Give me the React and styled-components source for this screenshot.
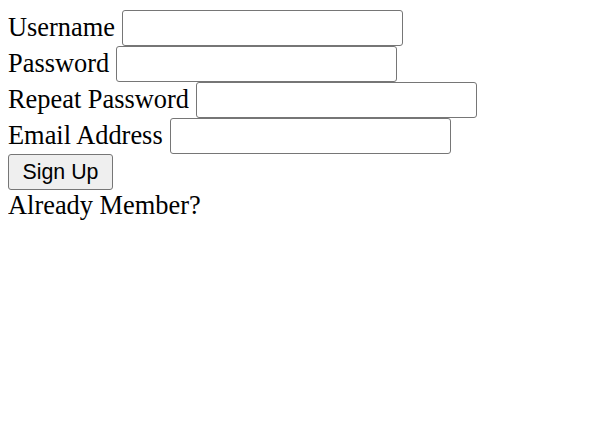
import React from "react";
import styled, { createGlobalStyle } from "styled-components";

const Global = createGlobalStyle`
  html, body { margin: 0; padding: 0; background: #fff; }
  body {
    margin: 8px;
    font-family: "Liberation Serif", "Times New Roman", serif;
    font-size: 26.67px;
    color: #000;
  }
`;

const Form = styled.form`
  display: flex;
  flex-direction: column;
  padding-top: 2px;
`;

const Row = styled.div`
  display: flex;
  align-items: center;
  height: 36px;
  gap: 7px;
  white-space: nowrap;
`;

const Label = styled.label`
  font-size: 26.4px;
  line-height: 30px;
  margin-top: -2px;
`;

const Input = styled.input`
  box-sizing: border-box;
  width: 281px;
  height: 36px;
  border: 1px solid #767676;
  border-radius: 3px;
  background: #fff;
  padding: 2px 3px;
  font-size: 20px;
  outline: none;
`;

const Button = styled.button`
  box-sizing: border-box;
  width: 105px;
  height: 36px;
  padding: 0;
  border: 1px solid #767676;
  border-radius: 3px;
  background: #efefef;
  font-family: "Liberation Sans", Arial, sans-serif;
  font-size: 21.33px;
  color: #000;
  align-self: flex-start;
`;

const Note = styled.div`
  font-size: 26.4px;
  line-height: 30.6px;
`;

const fields = [
  { id: "username", label: "Username", type: "text" },
  { id: "password", label: "Password", type: "password" },
  { id: "repeat", label: "Repeat Password", type: "password" },
  { id: "email", label: "Email Address", type: "email" },
];

export default function App() {
  return (
    <>
      <Global />
      <Form onSubmit={(e) => e.preventDefault()}>
        {fields.map((f) => (
          <Row key={f.id}>
            <Label htmlFor={f.id}>{f.label}</Label>
            <Input id={f.id} type={f.type} />
          </Row>
        ))}
        <Button type="submit">Sign Up</Button>
        <Note>Already Member?</Note>
      </Form>
    </>
  );
}
